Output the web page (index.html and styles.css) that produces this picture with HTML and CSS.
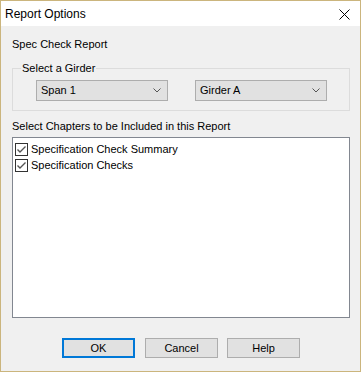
FILE: index.html
```html
<!DOCTYPE html>
<html>
<head>
<meta charset="utf-8">
<link rel="stylesheet" href="styles.css">
</head>
<body>
<div class="window">
  <div class="titlebar">
    <span class="title">Report Options</span>
    <svg class="close" width="11" height="11" viewBox="0 0 11 11"><path d="M0.5 0.5 L10.5 10.5 M10.5 0.5 L0.5 10.5" stroke="#000" stroke-width="1" fill="none"/></svg>
  </div>
  <div class="client">
    <div class="heading">Spec Check Report</div>
    <fieldset class="group">
      <legend class="group-label">Select a Girder</legend>
      <div class="combos">
        <div class="combo"><span>Span 1</span><svg class="chev" width="8" height="5" viewBox="0 0 8 5"><path d="M0.5 0.5 L4 4 L7.5 0.5" stroke="#555" stroke-width="1" fill="none"/></svg></div>
        <div class="combo"><span>Girder A</span><svg class="chev" width="8" height="5" viewBox="0 0 8 5"><path d="M0.5 0.5 L4 4 L7.5 0.5" stroke="#555" stroke-width="1" fill="none"/></svg></div>
      </div>
    </fieldset>
    <div class="label">Select Chapters to be Included in this Report</div>
    <div class="listbox">
      <div class="item"><svg class="check" width="13" height="13" viewBox="0 0 13 13"><rect x="0.5" y="0.5" width="12" height="12" fill="#fff" stroke="#333"/><path d="M2.5 6.5 L5 9 L10.5 3.5" stroke="#555" stroke-width="1.4" fill="none"/></svg><span>Specification Check Summary</span></div>
      <div class="item"><svg class="check" width="13" height="13" viewBox="0 0 13 13"><rect x="0.5" y="0.5" width="12" height="12" fill="#fff" stroke="#333"/><path d="M2.5 6.5 L5 9 L10.5 3.5" stroke="#555" stroke-width="1.4" fill="none"/></svg><span>Specification Checks</span></div>
    </div>
    <div class="buttons">
      <div class="btn default">OK</div>
      <div class="btn">Cancel</div>
      <div class="btn">Help</div>
    </div>
  </div>
</div>
</body>
</html>
```

FILE: styles.css
```css
html, body {
  margin: 0;
  padding: 0;
  background: #f0f0f0;
}
.window {
  width: 361px;
  height: 372px;
  box-sizing: border-box;
  border: 1px solid #cbb57d;
  display: flex;
  flex-direction: column;
  background: #f0f0f0;
  font-family: "Liberation Sans", Arial, sans-serif;
  font-size: 11px;
  color: #000;
}
.titlebar {
  height: 25px;
  background: #fff;
  display: flex;
  align-items: center;
  justify-content: space-between;
  padding: 0 10px 0 4px;
  flex: none;
}
.title {
  font-size: 12px;
  line-height: 15px;
  margin-top: 1px;
}
.close {
  display: block;
  margin-top: 2px;
}
.client {
  flex: 1;
  display: flex;
  flex-direction: column;
  padding: 12px 10px 0 11px;
  line-height: 13px;
}
.heading {
  height: 13px;
}
.group {
  margin: 11px 0 0 0;
  padding: 5px 22px 9px 23px;
  border: 1px solid #dcdcdc;
  min-width: 0;
}
.group-label {
  margin-left: -15px;
  padding: 0 1px;
  line-height: 13px;
}
.combos {
  display: flex;
  justify-content: space-between;
}
.combo {
  width: 132px;
  height: 21px;
  box-sizing: border-box;
  border: 1px solid #adadad;
  background: #e1e1e1;
  display: flex;
  align-items: center;
  justify-content: space-between;
  padding: 0 6px 0 4px;
}
.chev {
  display: block;
}
.label {
  margin-top: 9px;
}
.listbox {
  margin-top: 4px;
  height: 181px;
  box-sizing: border-box;
  border: 1px solid #828790;
  background: #fff;
  padding: 3px 0 0 2px;
}
.item {
  height: 16px;
  display: flex;
  align-items: center;
  gap: 3px;
}
.check {
  display: block;
}
.buttons {
  display: flex;
  margin-top: 20px;
  margin-left: 50px;
  gap: 9px;
}
.btn {
  width: 73px;
  height: 20px;
  box-sizing: border-box;
  border: 1px solid #adadad;
  background: #e1e1e1;
  display: flex;
  align-items: center;
  justify-content: center;
}
.btn.default {
  border: 2px solid #0078d7;
  margin-right: 1px;
}
```
